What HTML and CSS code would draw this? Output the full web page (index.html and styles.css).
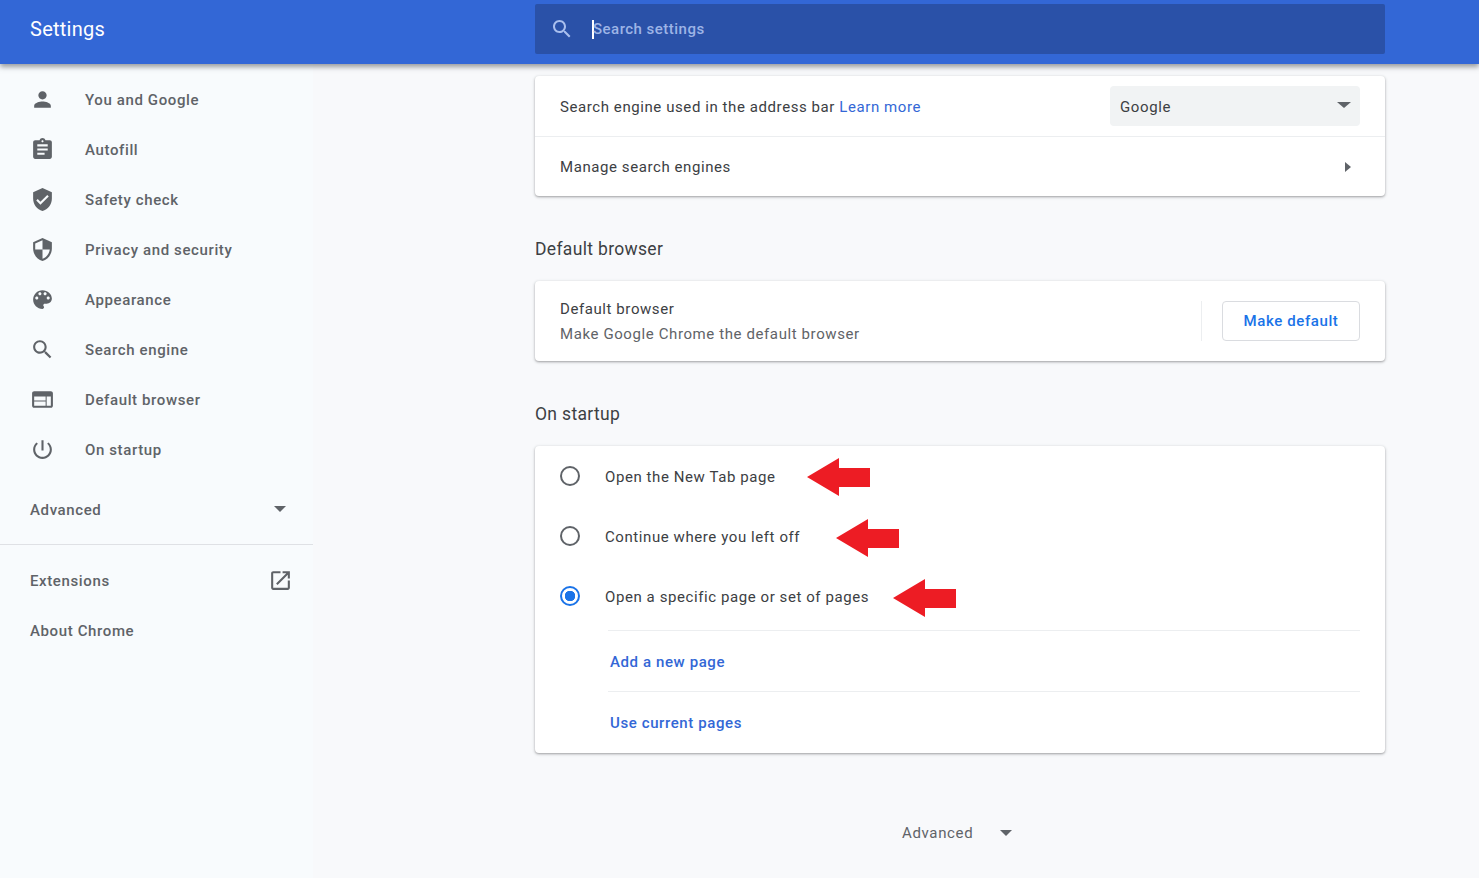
FILE: index.html
```html
<!DOCTYPE html>
<html lang="en">
<head>
<meta charset="utf-8">
<title>Settings</title>
<link rel="stylesheet" href="styles.css">
</head>
<body>
<header class="topbar">
  <div class="brand">Settings</div>
  <div class="searchbox">
    <svg class="search-icon" viewBox="0 0 24 24"><path d="M15.5 14h-.79l-.28-.27C15.41 12.59 16 11.11 16 9.5 16 5.91 13.09 3 9.5 3S3 5.91 3 9.5 5.91 16 9.5 16c1.61 0 3.09-.59 4.23-1.57l.27.28v.79l5 4.99L20.49 19l-4.99-5zm-6 0C7.01 14 5 11.99 5 9.5S7.01 5 9.5 5 14 7.01 14 9.5 11.99 14 9.5 14z"/></svg>
    <span class="caret"></span>
    <span class="placeholder">Search settings</span>
  </div>
</header>
<div class="layout">
  <nav class="sidebar">
    <a class="nav-item"><svg class="nav-icon" viewBox="0 0 24 24"><path d="M12 12c2.21 0 4-1.79 4-4s-1.79-4-4-4-4 1.79-4 4 1.79 4 4 4zm0 2c-2.67 0-8 1.34-8 4v2h16v-2c0-2.66-5.33-4-8-4z"/></svg><span class="label">You and Google</span></a>
    <a class="nav-item"><svg class="nav-icon" viewBox="0 0 24 24"><path d="M19 3h-4.18C14.4 1.84 13.3 1 12 1c-1.3 0-2.4.84-2.82 2H5c-1.1 0-2 .9-2 2v14c0 1.1.9 2 2 2h14c1.1 0 2-.9 2-2V5c0-1.1-.9-2-2-2zm-7 0c.55 0 1 .45 1 1s-.45 1-1 1-1-.45-1-1 .45-1 1-1zm2 14H7v-2h7v2zm3-4H7v-2h10v2zm0-4H7V7h10v2z"/></svg><span class="label">Autofill</span></a>
    <a class="nav-item"><svg class="nav-icon" viewBox="0 0 24 24"><path d="M12 1L3 5v6c0 5.55 3.84 10.74 9 12 5.16-1.26 9-6.45 9-12V5l-9-4zm-2 16l-4-4 1.41-1.41L10 14.17l6.59-6.59L18 9l-8 8z"/></svg><span class="label">Safety check</span></a>
    <a class="nav-item"><svg class="nav-icon" viewBox="0 0 24 24"><path d="M12 1L3 5v6c0 5.55 3.84 10.74 9 12 5.16-1.26 9-6.45 9-12V5l-9-4zm0 10.99h7c-.53 4.12-3.28 7.79-7 8.94V12H5V6.3l7-3.11v8.8z"/></svg><span class="label">Privacy and security</span></a>
    <a class="nav-item"><svg class="nav-icon" viewBox="0 0 24 24"><path d="M12 3c-4.97 0-9 4.03-9 9s4.03 9 9 9c.83 0 1.5-.67 1.5-1.5 0-.39-.15-.74-.39-1.01-.23-.26-.38-.61-.38-.99 0-.83.67-1.5 1.5-1.5H16c2.76 0 5-2.24 5-5 0-4.42-4.03-8-9-8zm-5.5 9c-.83 0-1.5-.67-1.5-1.5S5.67 9 6.5 9 8 9.67 8 10.5 7.33 12 6.5 12zm3-4C8.67 8 8 7.33 8 6.5S8.67 5 9.5 5s1.5.67 1.5 1.5S10.33 8 9.5 8zm5 0c-.83 0-1.5-.67-1.5-1.5S13.67 5 14.5 5s1.5.67 1.5 1.5S15.33 8 14.5 8zm3 4c-.83 0-1.5-.67-1.5-1.5S16.67 9 17.5 9s1.5.67 1.5 1.5-.67 1.5-1.5 1.5z"/></svg><span class="label">Appearance</span></a>
    <a class="nav-item"><svg class="nav-icon" viewBox="0 0 24 24"><path d="M15.5 14h-.79l-.28-.27C15.41 12.59 16 11.11 16 9.5 16 5.91 13.09 3 9.5 3S3 5.91 3 9.5 5.91 16 9.5 16c1.61 0 3.09-.59 4.23-1.57l.27.28v.79l5 4.99L20.49 19l-4.99-5zm-6 0C7.01 14 5 11.99 5 9.5S7.01 5 9.5 5 14 7.01 14 9.5 11.99 14 9.5 14z"/></svg><span class="label">Search engine</span></a>
    <a class="nav-item"><svg class="nav-icon" viewBox="0 0 24 24"><path d="M20 4H4c-1.1 0-1.99.9-1.99 2L2 18c0 1.1.9 2 2 2h16c1.1 0 2-.9 2-2V6c0-1.1-.9-2-2-2zm-5 14H4v-4h11v4zm0-5H4V9h11v4zm5 5h-4V9h4v9z"/></svg><span class="label">Default browser</span></a>
    <a class="nav-item"><svg class="nav-icon" viewBox="0 0 24 24"><path d="M13 3h-2v10h2V3zm4.83 2.17l-1.42 1.42C17.99 7.86 19 9.81 19 12c0 3.87-3.13 7-7 7s-7-3.13-7-7c0-2.19 1.01-4.14 2.58-5.42L6.17 5.17C4.23 6.82 3 9.26 3 12c0 4.97 4.03 9 9 9s9-4.03 9-9c0-2.74-1.23-5.18-3.17-6.83z"/></svg><span class="label">On startup</span></a>
    <div class="nav-advanced"><span class="label">Advanced</span><span class="tri-down nav-tri"></span></div>
    <div class="nav-rule"></div>
    <a class="nav-plain"><span class="label">Extensions</span><svg class="ext-icon" viewBox="0 0 24 24"><path d="M19 19H5V5h7V3H5c-1.11 0-2 .9-2 2v14c0 1.1.89 2 2 2h14c1.1 0 2-.9 2-2v-7h-2v7zM14 3v2h3.59l-9.83 9.83 1.41 1.41L19 6.41V10h2V3h-7z"/></svg></a>
    <a class="nav-plain"><span class="label">About Chrome</span></a>
  </nav>
  <main class="content">
    <section class="card">
      <div class="row">
        <span class="row-text nudge">Search engine used in the address bar <a class="link">Learn more</a></span>
        <div class="select"><span class="nudge">Google</span><span class="tri-down select-tri"></span></div>
      </div>
      <div class="row row-ruled">
        <span class="row-text">Manage search engines</span>
        <span class="tri-right"></span>
      </div>
    </section>

    <h2 class="section-title">Default browser</h2>
    <section class="card">
      <div class="row row-tall">
        <div class="stack nudge">
          <span class="row-text">Default browser</span>
          <span class="row-sub">Make Google Chrome the default browser</span>
        </div>
        <div class="action">
          <span class="vrule"></span>
          <button class="btn">Make default</button>
        </div>
      </div>
    </section>

    <h2 class="section-title">On startup</h2>
    <section class="card">
      <div class="radios">
        <div class="radio-row">
          <span class="radio"></span><span class="row-text nudge">Open the New Tab page</span>
          <svg class="arrow arrow-a" viewBox="0 0 63 38"><path d="M0 19L32 0V10H63V29H32V38Z"/></svg>
        </div>
        <div class="radio-row">
          <span class="radio"></span><span class="row-text nudge">Continue where you left off</span>
          <svg class="arrow arrow-b" viewBox="0 0 63 38"><path d="M0 19L32 0V10H63V29H32V38Z"/></svg>
        </div>
        <div class="radio-row">
          <span class="radio radio-on"></span><span class="row-text nudge">Open a specific page or set of pages</span>
          <svg class="arrow arrow-c" viewBox="0 0 63 38"><path d="M0 19L32 0V10H63V29H32V38Z"/></svg>
        </div>
      </div>
      <div class="sub-row"><a class="action-link nudge">Add a new page</a></div>
      <div class="sub-row sub-row-last"><a class="action-link">Use current pages</a></div>
    </section>

    <div class="footer-adv"><span>Advanced</span><span class="tri-down footer-tri"></span></div>
  </main>
</div>
</body>
</html>
```

FILE: styles.css
```css
* { box-sizing: border-box; }
html, body { margin: 0; height: 100%; }
body {
  height: 878px;
  overflow: hidden;
  background: #f8f9fb;
  font-family: Roboto, "Liberation Sans", sans-serif;
  font-size: 15px;
  color: #3c4043;
}
.topbar {
  position: relative;
  z-index: 2;
  height: 64px;
  display: flex;
  align-items: center;
  background: #3367d6;
  box-shadow: 0 3px 5px rgba(60, 64, 67, .5);
}
.brand {
  width: 535px;
  padding-left: 30px;
  margin-top: -6px;
  color: #fff;
  font-size: 20px;
  letter-spacing: .25px;
}
.searchbox {
  width: 850px;
  height: 50px;
  margin-top: -6px;
  display: flex;
  align-items: center;
  background: #2a51a8;
  border-radius: 2px;
  padding-left: 15px;
}
.search-icon { width: 24px; height: 24px; fill: #a9bfee; }
.caret { width: 2px; height: 19px; background: #fff; margin-left: 18px; }
.placeholder { color: #9db4e6; font-size: 15px; font-weight: 500; margin-left: -1px; letter-spacing: .48px; }
.layout { display: flex; }
.sidebar {
  width: 313px;
  flex: none;
  padding-top: 10px;
  background: #f8fbfd;
  height: 814px;
  font-weight: 500;
  color: #5f6368;
  letter-spacing: .62px;
}
.label { padding-top: 2px; }
.nudge { padding-top: 2px; }
.nav-item {
  height: 50px;
  display: flex;
  align-items: center;
  padding-left: 30px;
}
.nav-icon { width: 25px; height: 25px; fill: #5f6368; margin-right: 30px; flex: none; }
.nav-advanced {
  height: 50px;
  margin-top: 10px;
  display: flex;
  align-items: center;
  justify-content: space-between;
  padding: 0 27px 0 30px;
}
.nav-rule { height: 1px; background: #dfe1e5; margin-top: 10px; margin-bottom: 10px; }
.nav-plain {
  height: 50px;
  display: flex;
  align-items: center;
  justify-content: space-between;
  padding: 0 20px 0 30px;
}
.ext-icon { width: 25px; height: 25px; fill: #5f6368; }
.tri-down {
  width: 0;
  height: 0;
  border-style: solid;
  border-color: #5f6368 transparent transparent;
}
.nav-tri { border-width: 6px 6px 0; }
.content { width: 850px; margin-left: 222px; padding-top: 12px; }
.card {
  background: #fff;
  border-radius: 4px;
  box-shadow: 0 1px 2px rgba(60, 64, 67, .35), 0 1px 3px 1px rgba(60, 64, 67, .12);
}
.row {
  height: 60px;
  display: flex;
  align-items: center;
  justify-content: space-between;
  padding: 0 25px;
}
.row-ruled { border-top: 1px solid #eceef0; }
.row-tall { height: 80px; }
.row-text { color: #3c4043; letter-spacing: .58px; }
.row-sub { color: #5f6368; letter-spacing: .6px; }
.link { color: #3367d6; }
.select {
  width: 250px;
  height: 40px;
  display: flex;
  align-items: center;
  justify-content: space-between;
  background: #f1f3f4;
  border-radius: 4px;
  padding: 0 10px;
  letter-spacing: .6px;
}
.select-tri { border-width: 6px 7px 0; margin-top: -2px; margin-right: -1px; }
.tri-right {
  width: 0;
  height: 0;
  margin-right: 9px;
  border-style: solid;
  border-width: 5.5px 0 5.5px 6px;
  border-color: transparent transparent transparent #5f6368;
}
.stack { display: flex; flex-direction: column; gap: 6px; line-height: 19px; }
.action { display: flex; align-items: center; }
.vrule { width: 1px; height: 40px; background: #eceef0; margin-right: 20px; }
.btn {
  width: 138px;
  height: 40px;
  padding: 0;
  background: #fff;
  border: 1px solid #dadce0;
  border-radius: 4px;
  color: #1a73e8;
  font: 500 15px Roboto, "Liberation Sans", sans-serif;
  letter-spacing: .6px;
}
.section-title {
  margin: 0;
  height: 85px;
  padding-top: 42px;
  font-size: 17.5px;
  font-weight: 400;
  line-height: 23px;
  letter-spacing: .33px;
  color: #3c4043;
}
.radios { padding-bottom: 4px; }
.radio-row { height: 60px; display: flex; align-items: center; padding-left: 25px; }
.radio {
  width: 20px;
  height: 20px;
  flex: none;
  border: 2px solid #5f6368;
  border-radius: 50%;
  margin-right: 25px;
}
.radio-on {
  border-color: #1a73e8;
  background: radial-gradient(circle, #1a73e8 0 5px, transparent 5.5px);
}
.arrow { width: 63px; height: 38px; fill: #ed1c24; flex: none; }
.arrow-a { margin-left: 32px; margin-top: 2px; }
.arrow-b { margin-left: 36px; margin-top: 4px; }
.arrow-c { margin-left: 24px; margin-top: 4px; }
.sub-row {
  margin-left: 73px;
  margin-right: 25px;
  height: 61px;
  display: flex;
  align-items: center;
  padding-left: 2px;
  border-top: 1px solid #eceef0;
}
.sub-row-last { height: 62px; }
.action-link { color: #3367d6; font-weight: 500; letter-spacing: .6px; }
.footer-adv {
  display: flex;
  align-items: center;
  margin-top: 68px;
  margin-left: 367px;
  height: 24px;
  color: #5f6368;
  letter-spacing: .65px;
}
.footer-tri { border-width: 6px 6px 0; margin-left: 27px; }
```
